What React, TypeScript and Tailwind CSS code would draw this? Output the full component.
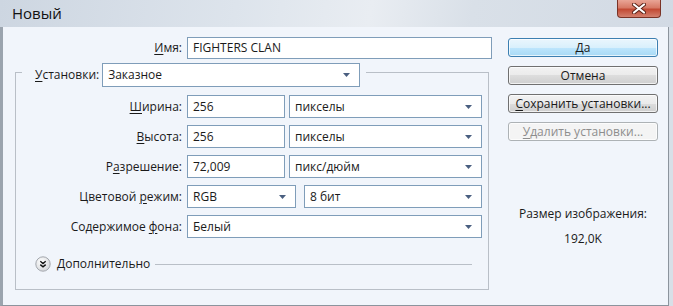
import React from "react";

const Arrow = () => (
  <svg width="7" height="4" viewBox="0 0 7 4" className="shrink-0">
    <path d="M0 0H7L3.5 4Z" fill="#4a5f80" />
  </svg>
);

const Field = ({ value, w }: { value: string; w: string }) => (
  <div className={`h-[23px] border border-[#7f9db9] bg-white flex items-center pl-[5px] ${w}`}>
    {value}
  </div>
);

const Select = ({ value, w, h = "h-[23px]" }: { value: string; w: string; h?: string }) => (
  <div
    className={`${h} border border-[#7f9db9] bg-white flex items-center justify-between pl-[5px] pr-[9px] ${w}`}
  >
    <span>{value}</span>
    <Arrow />
  </div>
);

const U = ({ children }: { children: React.ReactNode }) => (
  <span className="underline underline-offset-2 decoration-1">{children}</span>
);

const Row = ({ label, children }: { label: React.ReactNode; children: React.ReactNode }) => (
  <div className="flex items-center">
    <div className="w-[166px] text-right">{label}</div>
    <div className="ml-[5px] flex gap-[4px]">{children}</div>
  </div>
);

const Btn = ({
  children,
  kind = "normal",
}: {
  children: React.ReactNode;
  kind?: "default" | "normal" | "disabled";
}) => {
  const look =
    kind === "default"
      ? "border-[#3c7fb1] bg-[linear-gradient(#eaf6fd_0%,#d9f0fc_50%,#bee6fd_50%,#a7d9f5_100%)]"
      : kind === "disabled"
        ? "border-[#adb2b5] bg-[#f4f4f4] text-[#8d8d8d]"
        : "border-[#707070] bg-[linear-gradient(#f2f2f2_0%,#ebebeb_50%,#dddddd_50%,#cfcfcf_100%)]";
  return (
    <div
      className={`h-[19px] rounded-[3px] border flex items-center justify-center leading-none shadow-[inset_0_0_0_1px_rgba(255,255,255,0.7)] ${look}`}
    >
      {children}
    </div>
  );
};

const Expand = () => (
  <svg width="16" height="16" viewBox="0 0 16 16" className="shrink-0">
    <defs>
      <radialGradient id="eg" cx="0.4" cy="0.35" r="0.7">
        <stop offset="0" stopColor="#ffffff" />
        <stop offset="1" stopColor="#d4d6d9" />
      </radialGradient>
    </defs>
    <circle cx="8" cy="8" r="7.2" fill="url(#eg)" stroke="#a4a8ae" />
    <path d="M5.3 5.3L8 7.6L10.7 5.3M5.3 8.6L8 10.9L10.7 8.6" fill="none" stroke="#111" strokeWidth="1.4" />
  </svg>
);

export default function App() {
  return (
    <div className="w-[673px] h-[306px] flex flex-col bg-[#d8dfe7] font-['Open_Sans',sans-serif] text-[12px] text-[#1a1a1a]">
      <div className="h-[27px] flex items-start bg-[linear-gradient(100deg,#cdd6e1_0%,#dde4ec_35%,#e9edf2_55%,#d9e0e8_70%,#d2dae4_100%)]">
        <div className="pl-[12px] pt-[3px] text-[15px] leading-[20px] text-[#111]">Новый</div>
        <div className="ml-auto mr-[12px] w-[44px] h-[18px] rounded-b-[4px] border border-t-0 border-[#7a3326] bg-[linear-gradient(#e9a596_0%,#d77a66_45%,#c24a34_55%,#d3806e_100%)] flex items-center justify-center">
          <svg width="14" height="11" viewBox="0 0 14 11">
            <path d="M2 1.5L12 9.5M12 1.5L2 9.5" stroke="#5b2217" strokeWidth="4" strokeLinecap="round" />
            <path d="M2 1.5L12 9.5M12 1.5L2 9.5" stroke="#ffffff" strokeWidth="2.2" strokeLinecap="round" />
          </svg>
        </div>
      </div>

      <div className="flex-1 flex">
        <div className="w-[669px] flex border-l-[3px] border-r border-b border-l-[#9ba4ae] border-r-[#8c949d] border-b-[#8c949d] bg-[#f1f5fb]">
          <div className="w-[493px] pt-[10px]">
            <div className="flex items-center">
              <div className="w-[179px] text-right">
                <U>И</U>мя:
              </div>
              <div className="ml-[5px] h-[22px] w-[305px] border border-[#7f9db9] bg-white flex items-center pl-[5px]">
                FIGHTERS CLAN
              </div>
            </div>

            <fieldset className="ml-[12px] mt-[4px] w-[474px] border border-[#b9bfc7]">
              <legend className="ml-[6px] h-[18px] flex items-start pl-[13px] pr-[6px]">
                <span className="leading-[24px]">
                  <U>У</U>становки:
                </span>
                <div className="ml-[3px]">
                  <Select value="Заказное" w="w-[258px]" h="h-[24px]" />
                </div>
              </legend>

              <div className="flex flex-col gap-[7px] pt-[14px]">
                <Row
                  label={
                    <>
                      <U>Ш</U>ирина:
                    </>
                  }
                >
                  <Field value="256" w="w-[98px]" />
                  <Select value="пикселы" w="w-[193px]" />
                </Row>
                <Row
                  label={
                    <>
                      <U>В</U>ысота:
                    </>
                  }
                >
                  <Field value="256" w="w-[98px]" />
                  <Select value="пикселы" w="w-[193px]" />
                </Row>
                <Row
                  label={
                    <>
                      Р<U>а</U>зрешение:
                    </>
                  }
                >
                  <Field value="72,009" w="w-[98px]" />
                  <Select value="пикс/дюйм" w="w-[193px]" />
                </Row>
                <Row
                  label={
                    <>
                      Цветовой <U>р</U>ежим:
                    </>
                  }
                >
                  <Select value="RGB" w="w-[109px]" />
                  <div className="ml-[4px]">
                    <Select value="8 бит" w="w-[178px]" />
                  </div>
                </Row>
                <Row
                  label={
                    <>
                      Содержимое <U>ф</U>она:
                    </>
                  }
                >
                  <Select value="Белый" w="w-[295px]" />
                </Row>
              </div>

              <div className="mt-[18px] mb-[17px] ml-[19px] mr-[16px] h-[16px] flex items-center">
                <Expand />
                <span className="ml-[6px]">Дополнительно</span>
                <div className="ml-[5px] flex-1 h-px bg-[#b9bfc7]" />
              </div>
            </fieldset>
          </div>

          <div className="ml-[12px] w-[150px] pt-[11px] flex flex-col">
            <div className="flex flex-col gap-[9px]">
              <Btn kind="default">Да</Btn>
              <Btn>Отмена</Btn>
              <Btn>
                <span>
                  <U>С</U>охранить установки...
                </span>
              </Btn>
              <Btn kind="disabled">
                <span>
                  <U>У</U>далить установки...
                </span>
              </Btn>
            </div>
            <div className="mt-[65px] leading-[16px] text-center">Размер изображения:</div>
            <div className="mt-[9px] leading-[16px] text-center">192,0K</div>
          </div>
        </div>
      </div>
    </div>
  );
}
